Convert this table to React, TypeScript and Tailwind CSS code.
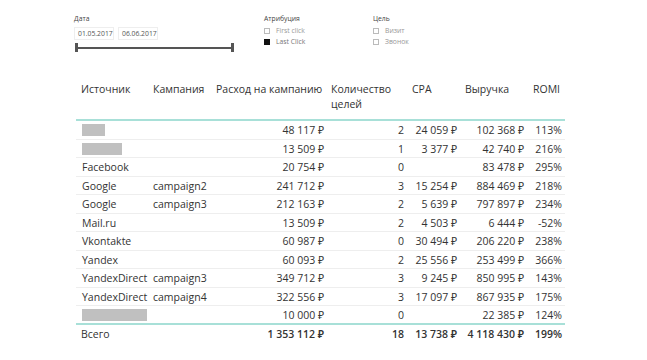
import React from "react";

type Row = {
  src: string;
  box?: number;
  camp?: string;
  spend: string;
  goals: string;
  cpa?: string;
  rev: string;
  romi: string;
};

const rows: Row[] = [
  { src: "", box: 23, spend: "48 117 ₽", goals: "2", cpa: "24 059 ₽", rev: "102 368 ₽", romi: "113%" },
  { src: "", box: 40, spend: "13 509 ₽", goals: "1", cpa: "3 377 ₽", rev: "42 740 ₽", romi: "216%" },
  { src: "Facebook", spend: "20 754 ₽", goals: "0", rev: "83 478 ₽", romi: "295%" },
  { src: "Google", camp: "campaign2", spend: "241 712 ₽", goals: "3", cpa: "15 254 ₽", rev: "884 469 ₽", romi: "218%" },
  { src: "Google", camp: "campaign3", spend: "212 163 ₽", goals: "2", cpa: "5 639 ₽", rev: "797 897 ₽", romi: "234%" },
  { src: "Mail.ru", spend: "13 509 ₽", goals: "2", cpa: "4 503 ₽", rev: "6 444 ₽", romi: "-52%" },
  { src: "Vkontakte", spend: "60 987 ₽", goals: "0", cpa: "30 494 ₽", rev: "206 220 ₽", romi: "238%" },
  { src: "Yandex", spend: "60 093 ₽", goals: "2", cpa: "25 556 ₽", rev: "253 499 ₽", romi: "366%" },
  { src: "YandexDirect", camp: "campaign3", spend: "349 712 ₽", goals: "3", cpa: "9 245 ₽", rev: "850 995 ₽", romi: "143%" },
  { src: "YandexDirect", camp: "campaign4", spend: "322 556 ₽", goals: "3", cpa: "17 097 ₽", rev: "867 935 ₽", romi: "175%" },
  { src: "", box: 65, spend: "10 000 ₽", goals: "0", rev: "22 385 ₽", romi: "124%" },
];

const grid = "grid grid-cols-[72px_64px_116px_80px_53px_67px_37px]";

function Check({ checked, label, dark }: { checked?: boolean; label: string; dark?: boolean }) {
  return (
    <div className="flex items-center gap-[6px] h-[11px]">
      <div
        className={
          checked
            ? "w-[6px] h-[6px] bg-[#111] border border-[#111]"
            : "w-[6px] h-[6px] border border-[#bbb] bg-white"
        }
      />
      <span className={dark ? "text-[#777]" : "text-[#999]"}>{label}</span>
    </div>
  );
}

export default function App() {
  return (
    <div
      className="w-[647px] h-[360px] bg-white relative overflow-hidden text-[#333]"
      style={{ fontFamily: '"Open Sans", "Noto Sans", sans-serif' }}
    >
      {/* Top filters */}
      <div className="flex pt-[15px] text-[6.8px] leading-[8px]">
        <div className="ml-[74px] w-[162px] flex flex-col">
          <div className="text-[#444]">Дата</div>
          <div className="flex gap-[4px] mt-[4px]">
            <div className="w-[40px] h-[13px] border border-[#eee] flex items-center pl-[3px] text-[#555]">01.05.2017</div>
            <div className="w-[40px] h-[13px] border border-[#eee] flex items-center pl-[3px] text-[#555]">06.06.2017</div>
          </div>
          <div className="mt-[3px] ml-[1px] w-[159px] h-[9px] flex items-center">
            <div className="w-[3px] h-[9px] bg-[#555]" />
            <div className="flex-1 h-[2px] bg-[#555]" />
            <div className="w-[3px] h-[9px] bg-[#555]" />
          </div>
        </div>
        <div className="ml-[28px] w-[109px] flex flex-col">
          <div className="text-[#444]">Атрибуция</div>
          <div className="mt-[2px] flex flex-col">
            <Check label="First click" />
            <Check checked dark label="Last Click" />
          </div>
        </div>
        <div className="flex flex-col">
          <div className="text-[#444]">Цель</div>
          <div className="mt-[2px] flex flex-col">
            <Check label="Визит" />
            <Check label="Звонок" />
          </div>
        </div>
      </div>

      {/* Table */}
      <div className="ml-[76px] mt-[28px] w-[489px] text-[10.5px]">
        <div className={`${grid} h-[41px] pt-[2px] leading-[15px] text-[#333] border-b-2 border-[#a8e0d8]`}>
          <div className="pl-[5px]">Источник</div>
          <div className="pl-[5px]">Кампания</div>
          <div className="pl-[4px]">Расход на кампанию</div>
          <div className="pl-[3px]">Количество<br />целей</div>
          <div className="pl-[4px]">CPA</div>
          <div className="pl-[4px]">Выручка</div>
          <div className="pl-[5px]">ROMI</div>
        </div>
        {rows.map((r, i) => (
          <div
            key={i}
            className={`${grid} h-[18.5px] items-center leading-[18px] ${
              i === rows.length - 1 ? "border-b-2 border-[#a8e0d8]" : "border-b border-[#eee]"
            }`}
          >
            <div className="pl-[6px] whitespace-nowrap">
              {r.box ? (
                <div className="h-[12px] bg-[#c0c0c0]" style={{ width: r.box }} />
              ) : (
                r.src
              )}
            </div>
            <div className="pl-[5px] whitespace-nowrap">{r.camp ?? ""}</div>
            <div className="text-right pr-[4px]">{r.spend}</div>
            <div className="text-right pr-[4px]">{r.goals}</div>
            <div className="text-right pr-[4px] whitespace-nowrap">{r.cpa ?? ""}</div>
            <div className="text-right pr-[4px] whitespace-nowrap">{r.rev}</div>
            <div className="text-right pr-[3px]">{r.romi}</div>
          </div>
        ))}
        <div className={`${grid} h-[20px] items-center font-semibold text-[#333]`}>
          <div className="pl-[5px] font-normal">Всего</div>
          <div />
          <div className="text-right pr-[4px] whitespace-nowrap">1 353 112 ₽</div>
          <div className="text-right pr-[4px]">18</div>
          <div className="text-right pr-[4px] whitespace-nowrap">13 738 ₽</div>
          <div className="text-right pr-[4px] whitespace-nowrap">4 118 430 ₽</div>
          <div className="text-right pr-[3px]">199%</div>
        </div>
      </div>
    </div>
  );
}
